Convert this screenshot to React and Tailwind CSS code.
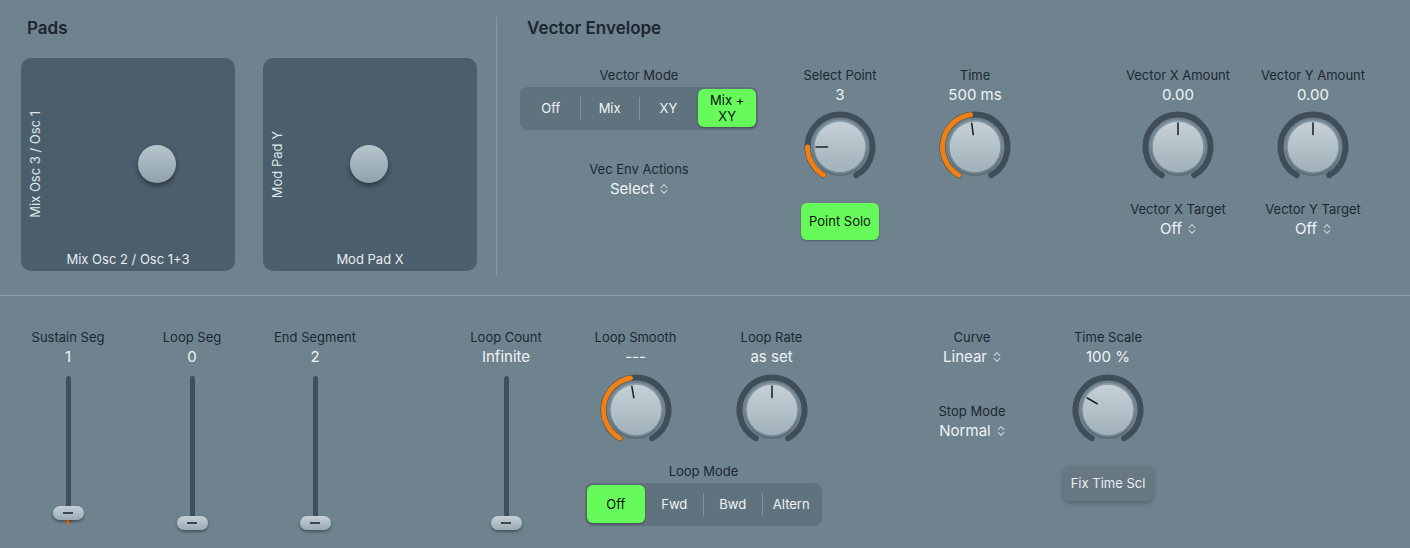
import React from "react";

// Knob geometry: angles are degrees clockwise from 12 o'clock.
function pt(r, a) {
  const rad = (a * Math.PI) / 180;
  return [37 + r * Math.sin(rad), 37 - r * Math.cos(rad)];
}
function arc(r, a1, a2) {
  const [x1, y1] = pt(r, a1);
  const [x2, y2] = pt(r, a2);
  const large = a2 - a1 > 180 ? 1 : 0;
  return `M${x1.toFixed(2)} ${y1.toFixed(2)} A${r} ${r} 0 ${large} 1 ${x2.toFixed(2)} ${y2.toFixed(2)}`;
}

function Knob({ id, angle, fill = false, className = "" }) {
  const [px1, py1] = pt(12.5, angle);
  const [px2, py2] = pt(24, angle);
  return (
    <svg width="74" height="74" viewBox="0 0 74 74" className={className}>
      <defs>
        <linearGradient id={id} x1="0" y1="0" x2="0" y2="1">
          <stop offset="0" stopColor="#c6d1d7" />
          <stop offset="1" stopColor="#a1b1ba" />
        </linearGradient>
        <linearGradient id={id + "b"} x1="0" y1="0" x2="0" y2="1">
          <stop offset="0" stopColor="#8a9ca6" />
          <stop offset="1" stopColor="#6f828d" />
        </linearGradient>
      </defs>
      <path d={arc(32.5, -150, 150)} stroke="#3f4e58" strokeWidth="6" fill="none" strokeLinecap="round" />
      {fill && (
        <path d={arc(32.5, -150, angle)} stroke="#f07f14" strokeWidth="5" fill="none" strokeLinecap="round" />
      )}
      <circle cx="37" cy="39" r="27" fill="#2f3b44" opacity="0.3" />
      <circle cx="37" cy="37" r="27" fill={`url(#${id}b)`} />
      <circle cx="37" cy="37" r="25.3" fill={`url(#${id})`} />
      <line x1={px1} y1={py1} x2={px2} y2={py2} stroke="#1c2630" strokeWidth="1.6" strokeLinecap="round" />
    </svg>
  );
}

function Chevrons() {
  return (
    <svg width="8" height="12" viewBox="0 0 8 12" className="ml-[6px]" fill="none" stroke="#c3cdd3" strokeWidth="1.2" strokeLinecap="round" strokeLinejoin="round">
      <path d="M1.2 4.6 L4 1.6 L6.8 4.6" />
      <path d="M1.2 7.4 L4 10.4 L6.8 7.4" />
    </svg>
  );
}

function Label({ children, className = "" }) {
  return <div className={`text-[13px] leading-[16px] text-[#1d2833] whitespace-nowrap ${className}`}>{children}</div>;
}

function Value({ children, className = "mt-[3px]" }) {
  return <div className={`text-[15px] leading-[18px] text-[#f0f3f5] whitespace-nowrap ${className}`}>{children}</div>;
}

function Popup({ children, className = "mt-[3px]" }) {
  return (
    <div className={`flex items-center text-[15px] leading-[18px] text-[#f0f3f5] whitespace-nowrap ${className}`}>
      {children}
      <Chevrons />
    </div>
  );
}

function Segmented({ items, active, className = "" }) {
  const out = [];
  items.forEach((it, i) => {
    if (i > 0) {
      const showSep = i !== active && i - 1 !== active;
      out.push(
        <div key={"s" + i} className={`w-px h-[23px] self-center ${showSep ? "bg-[#7f929c]" : "bg-transparent"}`} />
      );
    }
    out.push(
      <div
        key={i}
        className={`flex-1 flex items-center justify-center text-center text-[13px] leading-[16px] rounded-[6px] ${
          i === active
            ? "bg-[#66fb5b] text-[#111] shadow-[0_1px_2px_rgba(0,0,0,0.35)]"
            : "text-[#f0f3f5]"
        }`}
      >
        {it}
      </div>
    );
  });
  return (
    <div className={`flex h-[42px] p-[2px] rounded-[8px] bg-[#5f737e] shadow-[0_1px_1px_rgba(0,0,0,0.15)] ${className}`}>
      {out}
    </div>
  );
}

function Slider({ thumbTop, orange = false }) {
  return (
    <div className="relative mt-[10px] w-[32px] h-[156px]">
      <div className="absolute left-[13.5px] top-0 w-[5px] h-[147px] rounded-full bg-[#3f4e58]" />
      {orange && <div className="absolute left-[14px] top-[130px] w-[4px] h-[18px] rounded-full bg-[#e8790f]" />}
      <div
        className={`absolute left-[0.5px] w-[31px] h-[14px] rounded-full bg-gradient-to-b from-[#c6d1d7] to-[#9aabb4] shadow-[0_2px_3px_rgba(0,0,0,0.35)] flex items-center justify-center ${thumbTop}`}
      >
        <div className="w-[10px] h-[2px] bg-[#3b4852]" />
      </div>
    </div>
  );
}

function SliderCol({ label, value, thumbTop, orange, className = "" }) {
  return (
    <div className={`w-[100px] flex flex-col items-center ${className}`}>
      <Label>{label}</Label>
      <Value>{value}</Value>
      <Slider thumbTop={thumbTop} orange={orange} />
    </div>
  );
}

function Puck({ className }) {
  return (
    <div
      className={`absolute w-[38px] h-[38px] rounded-full bg-gradient-to-b from-[#b8c6cd] to-[#91a2ac] shadow-[0_3px_5px_rgba(0,0,0,0.4)] ${className}`}
    />
  );
}

function Pad({ xLabel, yLabel, puck }) {
  return (
    <div className="relative w-[214px] h-[213px] rounded-[10px] bg-[#4b5e6c] flex flex-col justify-end items-center pb-[4px]">
      <div className="absolute left-[6px] top-0 bottom-0 flex items-center">
        <div className="[writing-mode:vertical-rl] rotate-180 text-[13px] leading-[16px] text-[#dfe6ea] whitespace-nowrap">
          {yLabel}
        </div>
      </div>
      <Puck className={puck} />
      <div className="text-[13px] leading-[16px] text-[#e6ecef] whitespace-nowrap">{xLabel}</div>
    </div>
  );
}

export default function App() {
  return (
    <div className="w-[1410px] h-[548px] bg-[#6e838e] [font-family:Inter,'Noto_Sans',sans-serif] overflow-hidden select-none">
      {/* Upper section: pads and vector envelope */}
      <div className="flex h-[295px]">
        <div className="w-[496px]">
          <div className="pl-[27px] pt-[18px] text-[17px] leading-[20px] font-semibold text-[#1b2631]">Pads</div>
          <div className="mt-[20px] ml-[21px] flex gap-[28px]">
            <Pad xLabel="Mix Osc 2 / Osc 1+3" yLabel="Mix Osc 3 / Osc 1" puck="left-[117px] top-[87px]" />
            <Pad xLabel="Mod Pad X" yLabel="Mod Pad Y" puck="left-[87px] top-[87px]" />
          </div>
        </div>
        <div className="w-px mt-[17px] h-[258px] bg-[#8799a3]" />
        <div className="flex-1">
          <div className="pl-[30px] pt-[18px] text-[17px] leading-[20px] font-semibold text-[#1b2631]">Vector Envelope</div>
          <div className="mt-[29px] ml-[23px] flex items-start">
            <div className="w-[238px] flex flex-col items-center">
              <Label>Vector Mode</Label>
              <Segmented
                className="mt-[4px] w-[238px]"
                items={["Off", "Mix", "XY", <span key="m">Mix +<br />XY</span>]}
                active={3}
              />
              <Label className="mt-[32px]">Vec Env Actions</Label>
              <Popup>Select</Popup>
            </div>
            <div className="ml-[32px] w-[100px] flex flex-col items-center">
              <Label>Select Point</Label>
              <Value>3</Value>
              <Knob id="kSel" angle={-90} fill className="mt-[6px]" />
              <div className="mt-[19px] w-[78px] h-[37px] rounded-[6px] bg-[#66fb5b] shadow-[0_1px_2px_rgba(0,0,0,0.3)] flex items-center justify-center text-[13px] text-[#111]">
                Point Solo
              </div>
            </div>
            <div className="ml-[35px] w-[100px] flex flex-col items-center">
              <Label>Time</Label>
              <Value>500 ms</Value>
              <Knob id="kTime" angle={-8} fill className="mt-[6px]" />
            </div>
            <div className="ml-[93px] w-[120px] flex flex-col items-center">
              <Label>Vector X Amount</Label>
              <Value>0.00</Value>
              <Knob id="kVX" angle={0} className="mt-[6px]" />
              <Label className="mt-[17px]">Vector X Target</Label>
              <Popup>Off</Popup>
            </div>
            <div className="ml-[15px] w-[120px] flex flex-col items-center">
              <Label>Vector Y Amount</Label>
              <Value>0.00</Value>
              <Knob id="kVY" angle={0} className="mt-[6px]" />
              <Label className="mt-[17px]">Vector Y Target</Label>
              <Popup>Off</Popup>
            </div>
          </div>
        </div>
      </div>
      <div className="h-px bg-[#8a9ca6]" />

      {/* Lower section: segments, loop and time scale */}
      <div className="flex items-start pt-[33px] pl-[18px]">
        <SliderCol label="Sustain Seg" value="1" thumbTop="top-[130px]" orange />
        <SliderCol label="Loop Seg" value="0" thumbTop="top-[140px]" className="ml-[24px]" />
        <SliderCol label="End Segment" value="2" thumbTop="top-[140px]" className="ml-[23px]" />
        <SliderCol label="Loop Count" value="Infinite" thumbTop="top-[140px]" className="ml-[91px]" />

        <div className="ml-[29px] w-[237px] flex flex-col items-center">
          <div className="flex gap-[36px]">
            <div className="w-[100px] flex flex-col items-center">
              <Label>Loop Smooth</Label>
              <Value>---</Value>
              <Knob id="kLS" angle={-10} fill className="mt-[7px]" />
            </div>
            <div className="w-[100px] flex flex-col items-center">
              <Label>Loop Rate</Label>
              <Value>as set</Value>
              <Knob id="kLR" angle={0} className="mt-[7px]" />
            </div>
          </div>
          <Label className="mt-[16px]">Loop Mode</Label>
          <Segmented className="mt-[4px] w-[237px]" items={["Off", "Fwd", "Bwd", "Altern"]} active={0} />
        </div>

        <div className="ml-[100px] w-[100px] flex flex-col items-center">
          <Label>Curve</Label>
          <Popup>Linear</Popup>
          <Label className="mt-[37px]">Stop Mode</Label>
          <Popup>Normal</Popup>
        </div>

        <div className="ml-[36px] w-[100px] flex flex-col items-center">
          <Label>Time Scale</Label>
          <Value>100 %</Value>
          <Knob id="kTS" angle={-60} className="mt-[7px]" />
          <div className="mt-[19px] w-[89px] h-[35px] rounded-[6px] bg-[#677883] shadow-[0_2px_5px_rgba(0,0,0,0.25)] flex items-center justify-center text-[13px] text-[#e8edf0]">
            Fix Time Scl
          </div>
        </div>
      </div>
    </div>
  );
}
